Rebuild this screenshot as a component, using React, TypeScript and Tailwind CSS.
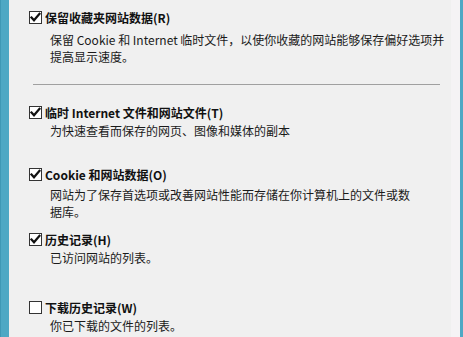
import React from "react";

const CheckBox = ({ checked }: { checked: boolean }) => (
  <span className="flex h-[13px] w-[13px] shrink-0 items-center justify-center border border-[#333333] bg-white">
    {checked && (
      <svg width="11" height="11" viewBox="0 0 11 11">
        <polyline
          points="1.5,5.5 4,8.3 9.5,1.8"
          fill="none"
          stroke="#111"
          strokeWidth="2.2"
          strokeLinecap="square"
        />
      </svg>
    )}
  </span>
);

type Item = {
  title: string;
  checked: boolean;
  lines: string[];
  top: string;
  gap: string;
};

const items: Item[] = [
  {
    title: "保留收藏夹网站数据(R)",
    checked: true,
    lines: [
      "保留 Cookie 和 Internet 临时文件，以使你收藏的网站能够保存偏好选项并",
      "提高显示速度。",
    ],
    top: "mt-[9px]",
    gap: "mt-[5px]",
  },
  {
    title: "临时 Internet 文件和网站文件(T)",
    checked: true,
    lines: ["为快速查看而保存的网页、图像和媒体的副本"],
    top: "mt-[19px]",
    gap: "mt-[1px]",
  },
  {
    title: "Cookie 和网站数据(O)",
    checked: true,
    lines: [
      "网站为了保存首选项或改善网站性能而存储在你计算机上的文件或数",
      "据库。",
    ],
    top: "mt-[27px]",
    gap: "mt-[3px]",
  },
  {
    title: "历史记录(H)",
    checked: true,
    lines: ["已访问网站的列表。"],
    top: "mt-[11px]",
    gap: "mt-[1px]",
  },
  {
    title: "下载历史记录(W)",
    checked: false,
    lines: ["你已下载的文件的列表。"],
    top: "mt-[33px]",
    gap: "mt-[1px]",
  },
];

const Section = ({ item }: { item: Item }) => (
  <div className={item.top}>
    <div className="flex h-[17px] items-center">
      <CheckBox checked={item.checked} />
      <span className="ml-[3px] font-bold text-[#111]">{item.title}</span>
    </div>
    <div className={`${item.gap} pl-[21px] text-[#1a1a1a]`}>
      {item.lines.map((line, i) => (
        <div key={i} className="h-[17px] whitespace-nowrap">
          {line}
        </div>
      ))}
    </div>
  </div>
);

export default function App() {
  return (
    <div className="flex h-[337px] w-[463px] overflow-hidden bg-[#f0f0f0] text-[12px] leading-[17px] font-['Noto_Sans_CJK_SC','Noto_Sans',sans-serif]">
      <div className="w-[9px] shrink-0 border-l border-[#3f98b5] bg-[#4ea8c4]" />
      <div className="flex-1 pl-[20px]">
        <Section item={items[0]} />
        <div className="mt-[19px] mr-[11px] ml-[4px] h-px bg-[#a0a0a0]" />
        {items.slice(1).map((item, i) => (
          <Section key={i} item={item} />
        ))}
      </div>
      <div className="w-[9px] shrink-0 bg-[#f5f3f5]" />
      <div className="w-[3px] shrink-0 bg-[#4ea8c4]" />
    </div>
  );
}
